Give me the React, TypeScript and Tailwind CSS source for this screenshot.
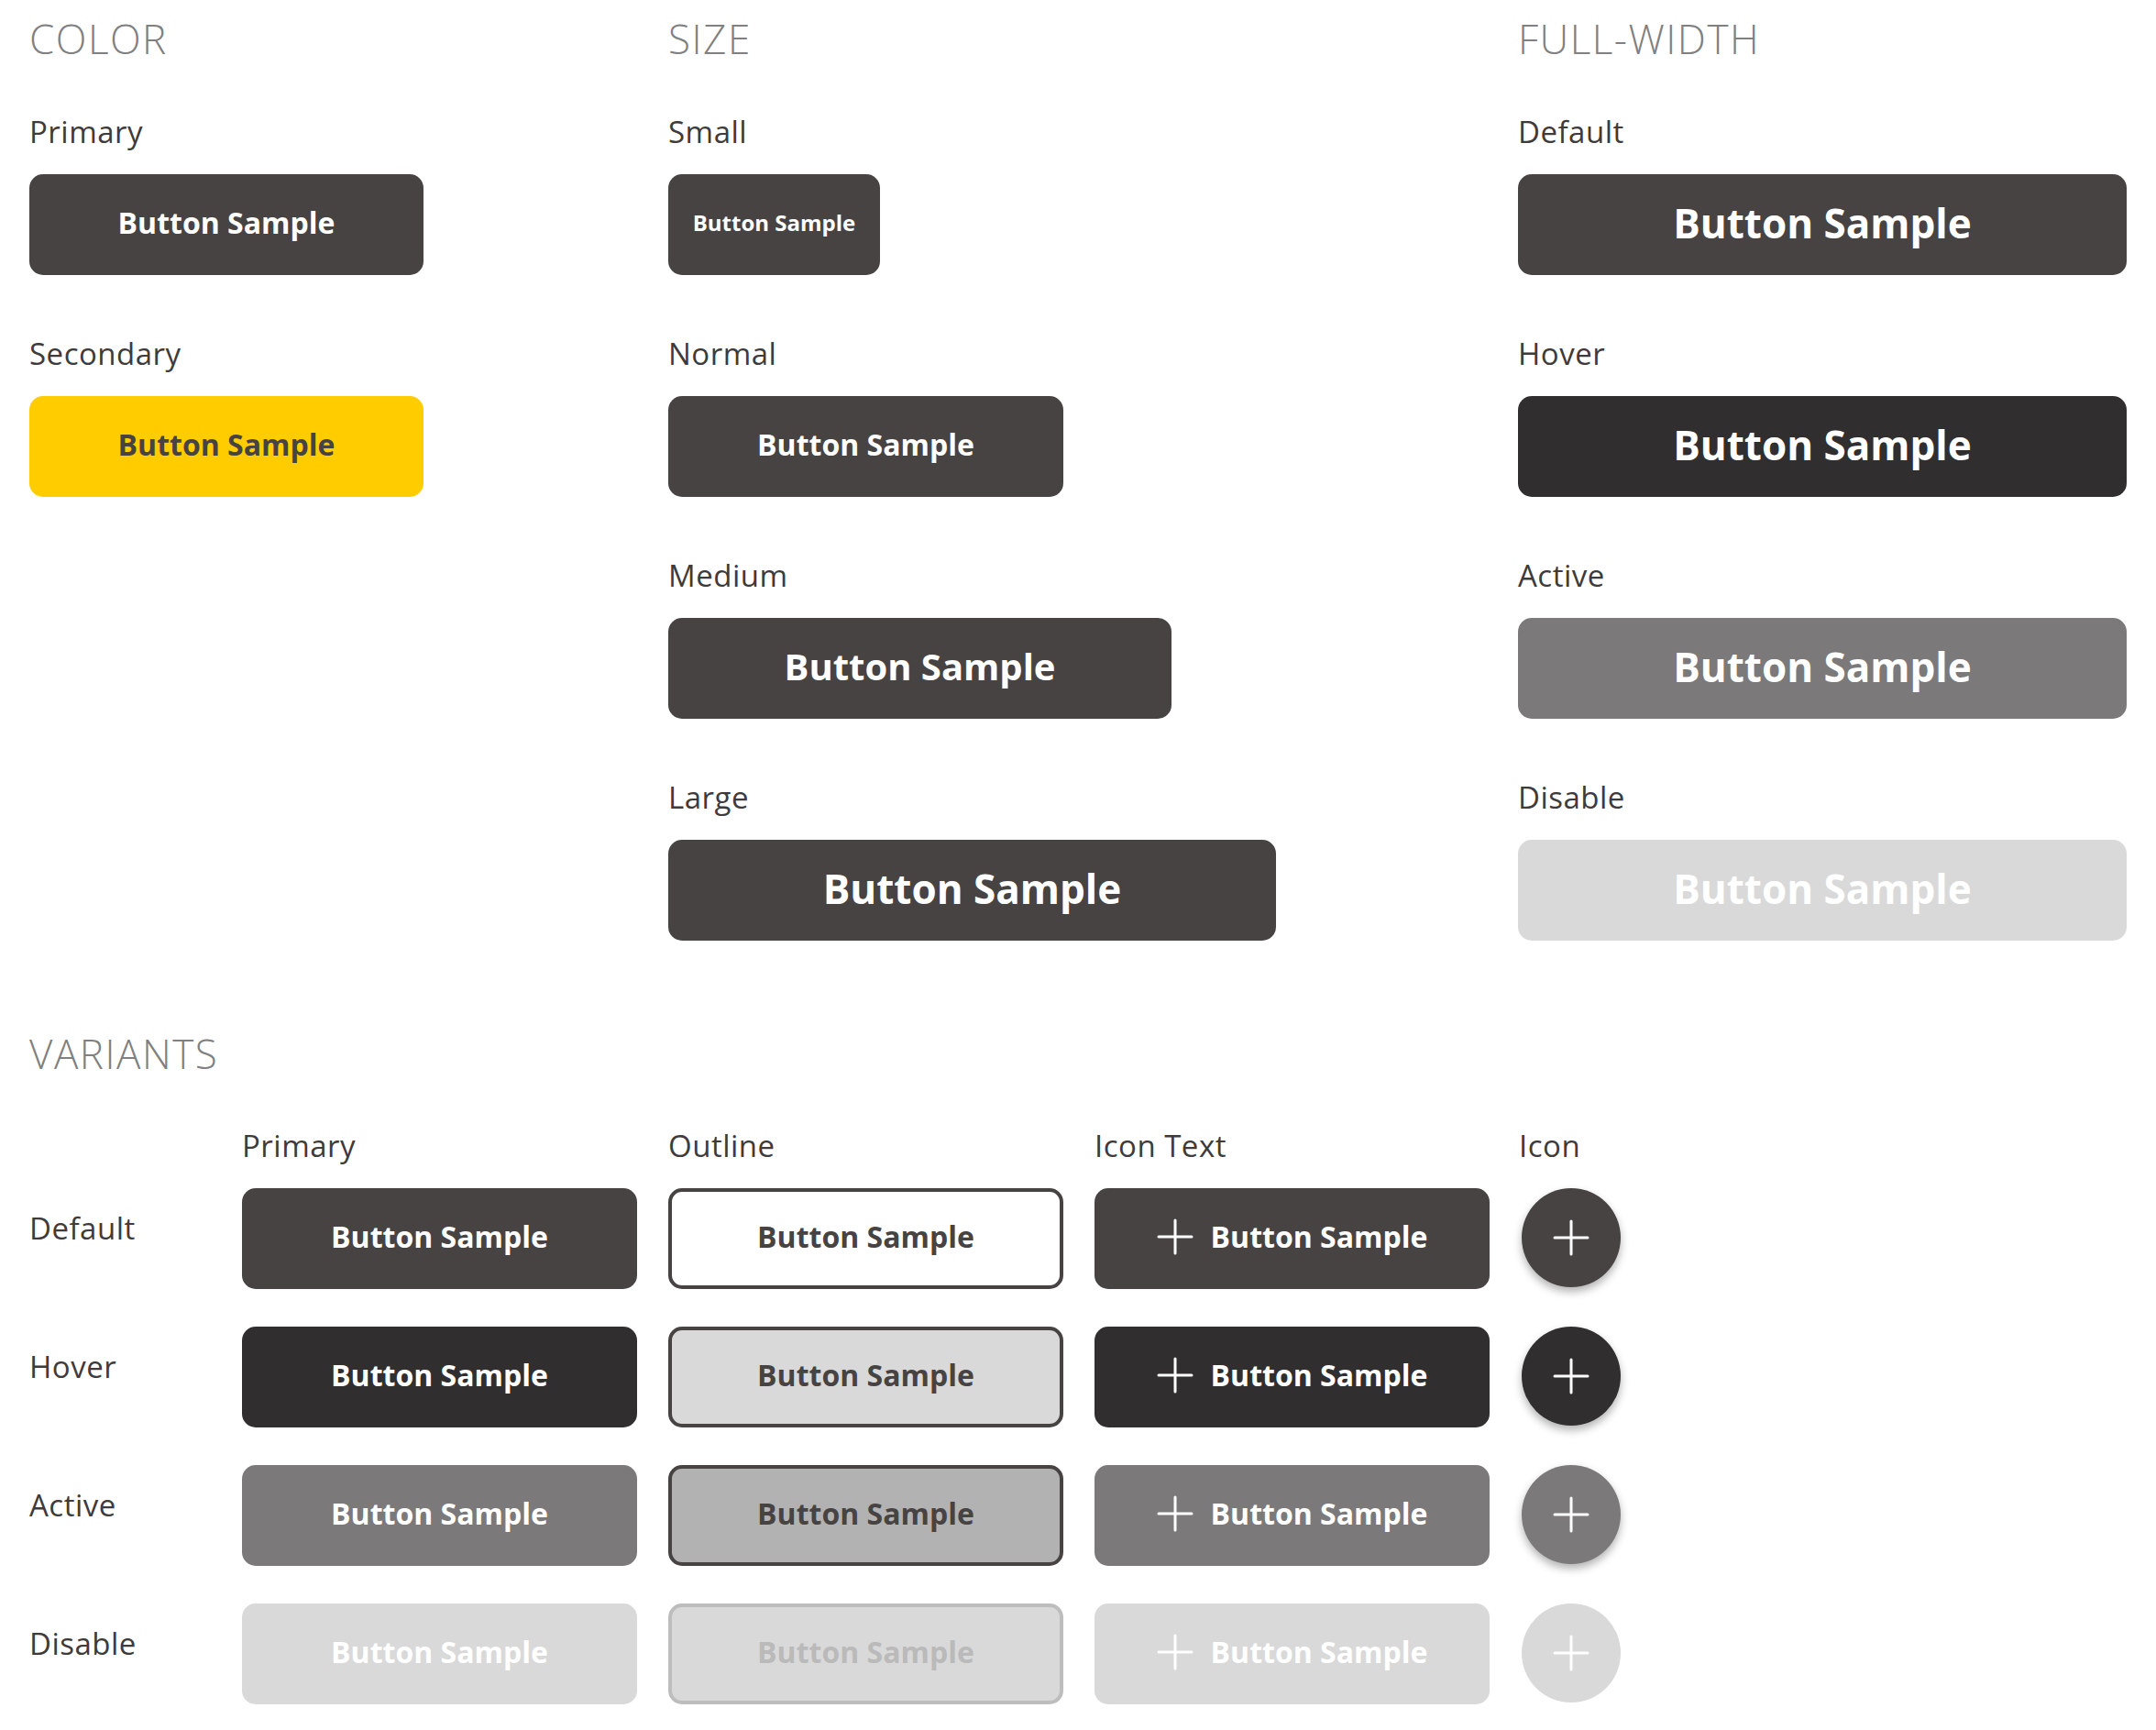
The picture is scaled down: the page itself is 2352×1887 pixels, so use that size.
import React from 'react';

type Tone = 'default' | 'hover' | 'active' | 'disable';

const solid: Record<Tone, string> = {
    default: 'bg-[#474342] text-white',
    hover: 'bg-[#302e2f] text-white',
    active: 'bg-[#7b797a] text-white',
    disable: 'bg-[#d9d9d9] text-white',
};

const outline: Record<Tone, string> = {
    default: 'bg-white text-[#474342] border-[4px] border-[#474342]',
    hover: 'bg-[#d9d9d9] text-[#474342] border-[4px] border-[#474342]',
    active: 'bg-[#b3b2b2] text-[#474342] border-[4px] border-[#474342]',
    disable: 'bg-[#d9d9d9] text-[#bababa] border-[4px] border-[#bdbdbd]',
};

const tones: Tone[] = ['default', 'hover', 'active', 'disable'];
const toneLabel: Record<Tone, string> = {
    default: 'Default',
    hover: 'Hover',
    active: 'Active',
    disable: 'Disable',
};

function Plus({ size = 40 }: { size?: number }) {
    return (
        <svg width={size} height={size} viewBox="0 0 40 40" fill="none" className="shrink-0">
            <path d="M20 2v36M2 20h36" stroke="white" strokeWidth="3" strokeLinecap="round" />
        </svg>
    );
}

function Label({ children }: { children: React.ReactNode }) {
    return <div className="h-[33px] text-[33px] leading-none tracking-[0.5px] text-[#3e3b3a]">{children}</div>;
}

function Heading({ children }: { children: React.ReactNode }) {
    return <div className="h-[44px] text-[44px] font-light leading-none tracking-[1.5px] text-[#808080]">{children}</div>;
}

function Btn({ className, text = 'text-[32px]' }: { className: string; text?: string }) {
    return (
        <button className={`h-[110px] pb-[4px] rounded-[15px] font-bold leading-none flex items-center justify-center ${text} ${className}`}>
            Button Sample
        </button>
    );
}

function Item({ label, children }: { label: string; children: React.ReactNode }) {
    return (
        <div className="flex flex-col gap-[30px]">
            <Label>{label}</Label>
            {children}
        </div>
    );
}

export default function App() {
    return (
        <div className="w-[2352px] min-h-[1887px] bg-white px-[32px] pt-[20px] font-['Open_Sans',sans-serif]">
            {/* top section */}
            <div className="grid grid-cols-[664px_894px_1fr] gap-x-[33px]">
                <div className="flex flex-col">
                    <Heading>COLOR</Heading>
                    <div className="mt-[63px] flex flex-col gap-[69px]">
                        <Item label="Primary">
                            <Btn className={`w-[430px] ${solid.default}`} />
                        </Item>
                        <Item label="Secondary">
                            <Btn className="w-[430px] bg-[#ffcc00] text-[#474342]" />
                        </Item>
                    </div>
                </div>
                <div className="flex flex-col">
                    <Heading>SIZE</Heading>
                    <div className="mt-[63px] flex flex-col gap-[69px]">
                        <Item label="Small">
                            <Btn className={`w-[231px] ${solid.default}`} text="text-[24px]" />
                        </Item>
                        <Item label="Normal">
                            <Btn className={`w-[431px] ${solid.default}`} />
                        </Item>
                        <Item label="Medium">
                            <Btn className={`w-[549px] ${solid.default}`} text="text-[40px]" />
                        </Item>
                        <Item label="Large">
                            <Btn className={`w-[663px] ${solid.default}`} text="text-[44px]" />
                        </Item>
                    </div>
                </div>
                <div className="flex flex-col">
                    <Heading>FULL-WIDTH</Heading>
                    <div className="mt-[63px] flex flex-col gap-[69px]">
                        {tones.map((t) => (
                            <Item key={t} label={toneLabel[t]}>
                                <Btn className={`w-full ${solid[t]}`} text="text-[44px]" />
                            </Item>
                        ))}
                    </div>
                </div>
            </div>

            {/* variants */}
            <div className="mt-[101px]">
                <Heading>VARIANTS</Heading>
                <div className="mt-[62px] grid grid-cols-[199px_432px_432px_430px_1fr] gap-x-[33px] gap-y-[41px]">
                    <div />
                    <div className="-mb-[11px]"><Label>Primary</Label></div>
                    <div className="-mb-[11px]"><Label>Outline</Label></div>
                    <div className="-mb-[11px]"><Label>Icon Text</Label></div>
                    <div className="-mb-[11px]"><Label>Icon</Label></div>

                    {tones.map((t) => (
                        <React.Fragment key={t}>
                            <div className="pt-[27px]"><Label>{toneLabel[t]}</Label></div>
                            <Btn className={`w-[431px] ${solid[t]}`} />
                            <Btn className={`w-[431px] ${outline[t]}`} />
                            <button className={`w-[431px] h-[110px] pb-[4px] rounded-[15px] font-bold text-[32px] leading-none flex items-center justify-center gap-[19px] ${solid[t]}`}>
                                <Plus />
                                <span>Button Sample</span>
                            </button>
                            <div>
                                <button
                                    className={`ml-[3px] w-[108px] h-[108px] rounded-full flex items-center justify-center ${solid[t]} ${t === 'disable' ? '' : 'shadow-[0_5px_10px_rgba(0,0,0,0.3)]'}`}
                                >
                                    <Plus />
                                </button>
                            </div>
                        </React.Fragment>
                    ))}
                </div>
            </div>
        </div>
    );
}
